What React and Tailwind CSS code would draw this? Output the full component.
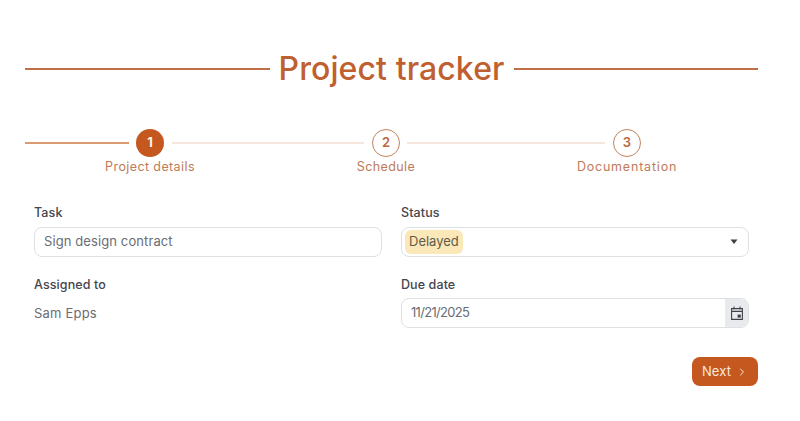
import { ChevronRight } from 'lucide-react';

function Field({ label, tight, children }) {
    return (
        <div className="w-[348px]">
            <div className="h-[18px] text-[12.5px] leading-[18px] font-medium tracking-[0.1px] text-[#45454d]">{label}</div>
            <div className={tight ? 'mt-[4px]' : 'mt-[5px]'}>{children}</div>
        </div>
    );
}

function Circle({ n, active }) {
    return (
        <div className={active
            ? 'w-[28px] h-[28px] shrink-0 rounded-full bg-[#c4581f] text-[#fdf1ea] flex items-center justify-center text-[13px] font-bold'
            : 'w-[28px] h-[28px] shrink-0 rounded-full border-[1.5px] border-[#c4835c] text-[#b96a40] flex items-center justify-center text-[13px] font-semibold'}>
            {n}
        </div>
    );
}

export default function App() {
    return (
        <div className="w-[800px] h-[421px] bg-white overflow-hidden pl-[25px] pr-[42px] pt-[47px] font-['Inter',sans-serif]">
            <div className="flex items-center h-[44px]">
                <div className="flex-1 h-[2px] bg-[#bf6f45]"></div>
                <h1 className="px-[9px] text-[32px] leading-[44px] font-medium tracking-[0.1px] text-[#bf6030]">Project tracker</h1>
                <div className="flex-1 h-[2px] bg-[#bf6f45]"></div>
            </div>

            <div className="mt-[38px] flex items-center">
                <div className="w-[104px] h-[2px] bg-[#d99a74]"></div>
                <div className="w-[7px]"></div>
                <Circle n="1" active />
                <div className="ml-[8px] w-[192px] h-[2px] bg-[#f6e6dd]"></div>
                <div className="ml-[8px]"><Circle n="2" /></div>
                <div className="ml-[7px] w-[198px] h-[2px] bg-[#f6e6dd]"></div>
                <div className="ml-[8px]"><Circle n="3" /></div>
            </div>
            <div className="mt-px flex text-[12.5px] leading-[18px] tracking-[0.4px] text-[#c07a58] text-center">
                <div className="w-[250px]">Project details</div>
                <div className="w-[222px]">Schedule</div>
                <div className="w-[260px] tracking-[0.8px]">Documentation</div>
            </div>

            <div className="mt-[28px] pl-[9px] flex gap-[19px]">
                <div>
                    <Field label="Task">
                        <div className="h-[30px] rounded-[8px] border border-[#dfe0e3] pl-[9px] flex items-center text-[13px] tracking-[0.1px] text-[#6a6d75]">Sign design contract</div>
                    </Field>
                    <div className="mt-[19px]">
                        <Field label="Assigned to">
                            <div className="h-[30px] flex items-center text-[13px] tracking-[0.2px] text-[#6a6d75]">Sam Epps</div>
                        </Field>
                    </div>
                </div>
                <div>
                    <Field label="Status">
                        <div className="h-[30px] rounded-[8px] border border-[#dfe0e3] pl-[3px] pr-[10px] flex items-center justify-between">
                            <span className="h-[24px] px-[4px] rounded-[6px] bg-[#fbe8b8] flex items-center text-[13px] text-[#605b4c]">Delayed</span>
                            <svg width="8" height="6" viewBox="0 0 8 6"><path d="M0.5 0.5h7L4 5z" fill="#3f3f46" /></svg>
                        </div>
                    </Field>
                    <div className="mt-[19px]">
                        <Field label="Due date" tight>
                            <div className="h-[30px] rounded-[8px] border border-[#dfe0e3] pl-[9px] flex items-center justify-between overflow-hidden">
                                <span className="text-[13px] tracking-[-0.7px] text-[#6a6d75]">11/21/2025</span>
                                <div className="w-[23px] h-full bg-[#e9eaed] flex items-center justify-center">
                                    <svg width="12" height="14" viewBox="0 0 12 14" fill="none">
                                        <path d="M0.6 2.6h10.8v10.8h-10.8zM0.6 5.4h10.8M3 0.6v3M9 0.6v3" stroke="#3f4248" strokeWidth="1.1" />
                                        <rect x="6.6" y="8.6" width="3.2" height="3" fill="#3f4248" />
                                    </svg>
                                </div>
                            </div>
                        </Field>
                    </div>
                </div>
            </div>

            <div className="mt-[28px] flex justify-end">
                <button className="h-[29px] w-[66px] rounded-[8px] bg-[#c4581f] text-[#fbe9df] text-[13px] tracking-[0.1px] flex items-center justify-center gap-[5px]">
                    Next <ChevronRight size={12} />
                </button>
            </div>
        </div>
    );
}
